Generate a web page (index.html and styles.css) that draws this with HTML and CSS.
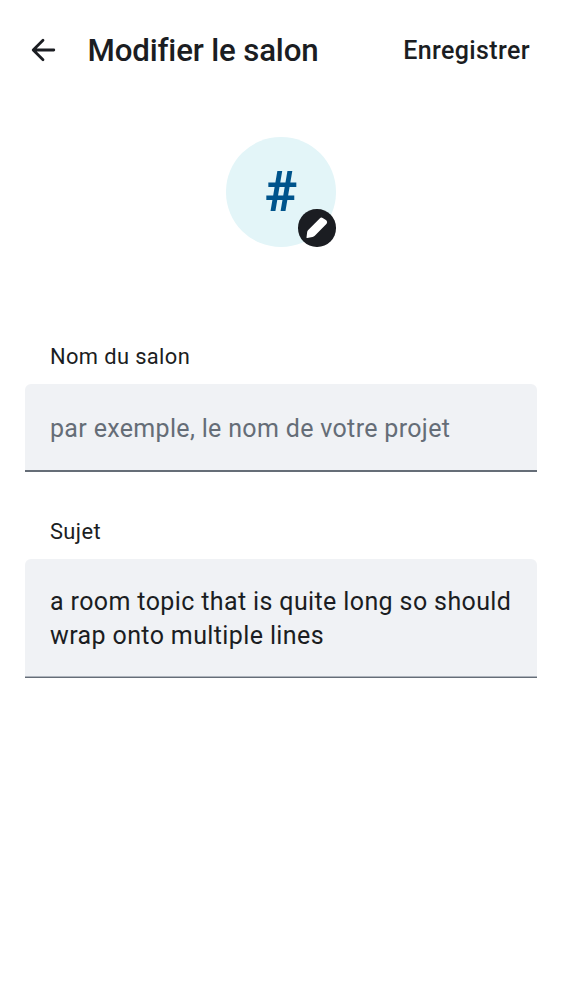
FILE: index.html
```html
<!DOCTYPE html>
<html lang="fr">
<head>
<meta charset="utf-8">
<title>Modifier le salon</title>
<link rel="stylesheet" href="styles.css">
</head>
<body>
<header class="bar">
  <svg class="back" viewBox="0 0 37 37"><path d="M28.800 18H8.500M18 8.200 8.200 18 18 27.800"/></svg>
  <h1 class="title">Modifier le salon</h1>
  <button class="save">Enregistrer</button>
</header>
<main class="content">
  <div class="avatar">#
    <span class="edit"><svg class="pencil" viewBox="0 0 114 114"><path d="M28 88Q25 89 26 85L28 69Q29 66 31 64L66 29Q70 24 75 27L86 34Q91 39 87 45L51 81Q48 84 44 85z"/></svg></span>
  </div>
  <label class="label">Nom du salon</label>
  <div class="field hint">par exemple, le nom de votre projet</div>
  <label class="label second">Sujet</label>
  <div class="field topic">a room topic that is quite long so should wrap onto multiple lines</div>
</main>
</body>
</html>
```
FILE: styles.css
```css
* { box-sizing: border-box; }
body { margin: 0; height: 1000px; background: #fff; color: #1b1d22; font-family: Roboto, sans-serif; }
.bar { display: flex; align-items: center; height: 100px; padding: 0 32px 0 25px; }
.back { width: 37px; height: 37px; fill: none; stroke: #1b1d22; stroke-width: 2.8; stroke-linecap: round; stroke-linejoin: round; }
.title { margin: 0 auto 0 25.500px; padding-top: 2px; font-size: 31.25px; font-weight: 500; line-height: 40px; letter-spacing: -.16px; }
.save { border: 0; padding: 2px 0 0; background: none; color: inherit; font: 500 25px/32px Roboto, sans-serif; letter-spacing: .38px; }
.content { display: flex; flex-direction: column; padding: 37.300px 25px 0; }
.avatar { position: relative; align-self: center; width: 109.4px; height: 109.4px; border-radius: 50%; background: #e3f5f8; color: #00548c; font-size: 55px; font-weight: 700; line-height: 111px; text-align: center; }
.edit { position: absolute; right: 0; bottom: 0; width: 37.5px; height: 37.5px; border-radius: 50%; background: #1b1d22; }
.pencil { display: block; width: 37.5px; height: 37.5px; fill: #fff; }
.label { margin: 97.300px 25px 0; font-size: 21.9px; line-height: 26px; letter-spacing: .37px; }
.second { margin-top: 47px; }
.field { margin-top: 14px; height: 88px; padding: 28px 25px; border-bottom: 2px solid #656d77; border-radius: 6px 6px 0 0; background: #f0f2f5; font-size: 25px; line-height: 34px; letter-spacing: .33px; white-space: nowrap; }
.hint { color: #656d77; }
.topic { height: 119px; padding: 26px 25px; border-bottom: 0; background: linear-gradient(#aeb4bc, #aeb4bc) 0 117px / 100% 1px no-repeat, linear-gradient(#656d77, #656d77) 0 118px / 100% 1px no-repeat, #f0f2f5; letter-spacing: .38px; white-space: normal; }
```
